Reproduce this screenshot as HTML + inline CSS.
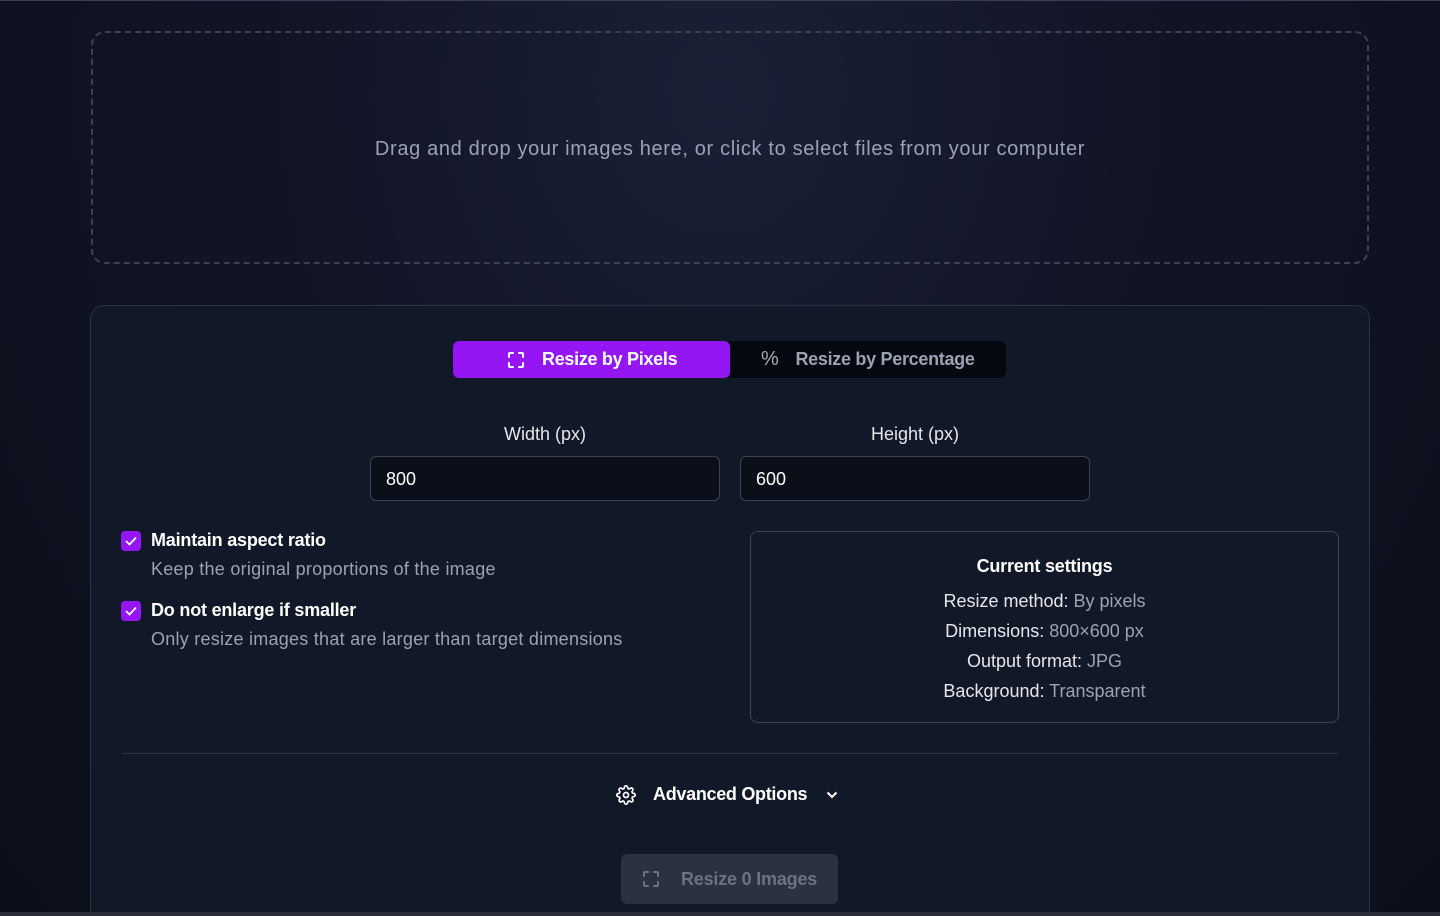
<!DOCTYPE html>
<html><head><style>
*{box-sizing:border-box;margin:0;padding:0}
html,body{width:1440px;height:916px;overflow:hidden}
body{font-family:"Liberation Sans",sans-serif;background:radial-gradient(ellipse at 50% 10%,#1c2036 0%,#111526 40%,#0b0f1a 100%);position:relative;color:#f3f4f6}
.top{position:absolute;left:0;top:0;width:1440px;height:1px;background:#3a3f55}
.drop{position:absolute;left:91px;top:31px;width:1278px;height:233px;border:2px dashed #3b4252;border-radius:14px;display:flex;align-items:center;justify-content:center;font-size:20px;color:#9aa3b2;letter-spacing:0.65px}
.drop span{position:relative;top:2px}
.panel{position:absolute;left:90px;top:305px;width:1280px;height:640px;border:1px solid #2b3140;border-radius:14px;background:#111827}
.tabs{position:absolute;left:362px;top:35px;width:553px;height:37px;background:#050810;border-radius:6px}
.tab{position:absolute;top:0;height:37px;display:flex;align-items:center;font-size:18px;font-weight:bold;letter-spacing:-0.3px}
.t1{left:0;width:277px;background:#9416f5;border-radius:6px;color:#fff;padding-left:52px}
.t2{left:278px;width:275px;color:#9aa3b2;padding-left:30px}
.lbl{position:absolute;top:118px;font-size:18px;color:#e5e7eb;text-align:center;width:350px}
.inp{position:absolute;top:150px;width:350px;height:45px;border:1px solid #3b4252;border-radius:6px;background:#0b0f1a;font-size:18px;color:#fff;padding:12px 15px}
.cb{position:absolute;left:30px;width:20px;height:20px;background:#9416f5;border-radius:4px}
.ct{position:absolute;left:60px;font-size:18px;font-weight:bold;color:#fff;letter-spacing:-0.2px}
.cd{position:absolute;left:60px;font-size:18px;color:#9aa3b2;letter-spacing:0.25px}
.box{position:absolute;left:659px;top:225px;width:589px;height:192px;border:1px solid #3b4252;border-radius:8px;text-align:center}
.box h3{font-size:18px;margin-top:24px;margin-bottom:9px;color:#fff;letter-spacing:-0.2px}
.box p{font-size:18px;color:#e5e7eb;line-height:30px}
.box p span{color:#9aa3b2}
.hr{position:absolute;left:30px;top:447px;width:1218px;height:1px;background:#2b3140}
.adv{position:absolute;left:525px;top:478px;display:flex;align-items:center;font-size:18px;font-weight:bold;color:#fff;letter-spacing:-0.3px}
.btn{position:absolute;left:530px;top:548px;width:217px;height:50px;background:#2a3140;border-radius:6px;display:flex;align-items:center;color:#6b7280;font-size:18px;font-weight:bold;padding-left:60px;letter-spacing:-0.2px}
.bot{position:absolute;left:0;top:912px;width:1440px;height:4px;background:#2a2f3b}
</style></head><body>
<div class="top"></div>
<div class="drop"><span>Drag and drop your images here, or click to select files from your computer</span></div>
<div class="panel">
 <div class="tabs">
  <div class="tab t1"><svg style="position:absolute;left:54px;top:10px" width="18" height="18" viewBox="0 0 18 18" fill="none" stroke="#fff" stroke-width="2" stroke-linecap="round"><path d="M2 6V3a1 1 0 0 1 1-1h3M12 2h3a1 1 0 0 1 1 1v3M16 12v3a1 1 0 0 1-1 1h-3M6 16H3a1 1 0 0 1-1-1v-3"/></svg><span style="margin-left:37px">Resize by Pixels</span></div>
  <div class="tab t2"><span style="font-size:20px;font-weight:normal;color:#aab">%</span><span style="margin-left:17px">Resize by Percentage</span></div>
 </div>
 <div class="lbl" style="left:279px">Width (px)</div>
 <div class="lbl" style="left:649px">Height (px)</div>
 <div class="inp" style="left:279px">800</div>
 <div class="inp" style="left:649px">600</div>
 <div class="cb" style="top:225px"><svg width="20" height="20" viewBox="0 0 20 20" fill="none" stroke="#fff" stroke-width="1.8"><path d="M5 10l3.5 3.5L15 6.5"/></svg></div>
 <div class="ct" style="top:224px">Maintain aspect ratio</div>
 <div class="cd" style="top:253px">Keep the original proportions of the image</div>
 <div class="cb" style="top:295px"><svg width="20" height="20" viewBox="0 0 20 20" fill="none" stroke="#fff" stroke-width="1.8"><path d="M5 10l3.5 3.5L15 6.5"/></svg></div>
 <div class="ct" style="top:294px">Do not enlarge if smaller</div>
 <div class="cd" style="top:323px">Only resize images that are larger than target dimensions</div>
 <div class="box"><h3>Current settings</h3>
  <p>Resize method: <span>By pixels</span></p>
  <p>Dimensions: <span>800×600 px</span></p>
  <p>Output format: <span>JPG</span></p>
  <p>Background: <span>Transparent</span></p>
 </div>
 <div class="hr"></div>
 <div class="adv"><svg width="20" height="20" viewBox="0 0 24 24" fill="none" stroke="#fff" stroke-width="2"><circle cx="12" cy="12" r="3"/><path d="M19.4 15a1.65 1.65 0 0 0 .33 1.82l.06.06a2 2 0 1 1-2.83 2.83l-.06-.06a1.65 1.65 0 0 0-1.82-.33 1.65 1.65 0 0 0-1 1.51V21a2 2 0 1 1-4 0v-.09A1.65 1.65 0 0 0 9 19.4a1.65 1.65 0 0 0-1.82.33l-.06.06a2 2 0 1 1-2.83-2.83l.06-.06a1.65 1.65 0 0 0 .33-1.82 1.65 1.65 0 0 0-1.51-1H3a2 2 0 1 1 0-4h.09A1.65 1.65 0 0 0 4.6 9a1.65 1.65 0 0 0-.33-1.82l-.06-.06a2 2 0 1 1 2.83-2.83l.06.06a1.65 1.65 0 0 0 1.82.33H9a1.65 1.65 0 0 0 1-1.51V3a2 2 0 1 1 4 0v.09a1.65 1.65 0 0 0 1 1.51 1.65 1.65 0 0 0 1.820-.33l.06-.06a2 2 0 1 1 2.83 2.83l-.06.06a1.65 1.65 0 0 0-.33 1.82V9a1.65 1.65 0 0 0 1.51 1H21a2 2 0 1 1 0 4h-.09a1.65 1.65 0 0 0-1.51 1z"/></svg><span style="margin-left:17px">Advanced Options</span><svg style="margin-left:18px" width="14" height="14" viewBox="0 0 14 14" fill="none" stroke="#fff" stroke-width="2"><path d="M2.5 4.5l4.5 4.5 4.5-4.5"/></svg></div>
 <div class="btn"><svg style="position:absolute;left:21px;top:16px" width="18" height="18" viewBox="0 0 18 18" fill="none" stroke="#6b7280" stroke-width="2" stroke-linecap="round"><path d="M2 6V3a1 1 0 0 1 1-1h3M12 2h3a1 1 0 0 1 1 1v3M16 12v3a1 1 0 0 1-1 1h-3M6 16H3a1 1 0 0 1-1-1v-3"/></svg>Resize 0 Images</div>
</div>
<div class="bot"></div>
</body></html>
